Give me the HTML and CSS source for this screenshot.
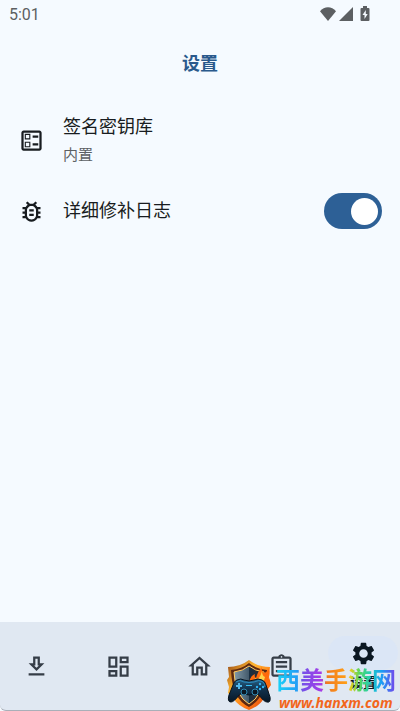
FILE: index.html
```
<!DOCTYPE html>
<html lang="zh-CN">
<head>
    <meta charset="UTF-8">
    <meta name="viewport" content="width=device-width, initial-scale=1.0">
    <title>设置</title>
    <link rel="stylesheet" href="styles.css">
</head>
<body>
    <!-- Status bar -->
    <div class="status-bar">
        <span class="time">5:01</span>
        <div class="status-icons">
            <svg width="18" height="16" viewBox="0 0 18 16"><path d="M9 15L1 5.200C3.200 2.600 6 1.300 9 1.300s5.800 1.300 8 3.900z"/></svg>
            <svg width="15" height="16" viewBox="0 0 15 16"><path d="M14 1v14H0z"/></svg>
            <svg class="battery" width="10" height="16" viewBox="0 0 10 16"><path fill-rule="evenodd" d="M3 0h4v2h1.500Q9.500 2 9.500 3v11q0 1-1 1h-7q-1 0-1-1V3q0-1 1-1H3zM5.800 4L2.500 9h2v4l3.200-5h-1.900z"/></svg>
        </div>
    </div>

    <header class="header">
        <h1>设置</h1>
    </header>

    <main class="settings">
        <button type="button" class="setting">
            <svg class="icon" viewBox="0 0 24 24"><path d="M13 7.500h5v2h-5zm0 7h5v2h-5zM19 3H5c-1.100 0-2 .9-2 2v14c0 1.100.9 2 2 2h14c1.100 0 2-.9 2-2V5c0-1.100-.9-2-2-2zm0 16H5V5h14v14zM11 6H6v5h5V6zm-1 4H7V7h3v3zm1 3H6v5h5v-5zm-1 4H7v-3h3v3z"/></svg>
            <span class="setting-text">
                <span class="setting-title">签名密钥库</span>
                <span class="setting-value">内置</span>
            </span>
        </button>
        <label class="setting" for="verbose-log">
            <svg class="icon" viewBox="0 0 24 24"><path d="M20 8h-2.810c-.45-.78-1.070-1.450-1.820-1.960L17 4.410 15.590 3l-2.170 2.170C12.960 5.060 12.490 5 12 5s-.96.06-1.410.17L8.410 3 7 4.410l1.620 1.630C7.880 6.550 7.260 7.220 6.810 8H4v2h2.090c-.05.33-.09.66-.09 1v1H4v2h2v1c0 .34.04.67.09 1H4v2h2.810c1.040 1.790 2.970 3 5.190 3s4.150-1.210 5.190-3H20v-2h-2.090c.05-.33.09-.66.09-1v-1h2v-2h-2v-1c0-.34-.04-.67-.09-1H20V8zm-4 4v3c0 .22-.03.47-.07.7l-.1.65-.37.65c-.72 1.240-2.040 2-3.460 2s-2.740-.77-3.460-2l-.37-.64-.1-.65C8.030 15.480 8 15.230 8 15v-4c0-.23.03-.48.07-.7l.1-.65.37-.65c.3-.52.72-.97 1.210-1.310l.57-.39.74-.18c.31-.08.63-.12.94-.12.32 0 .63.04.95.12l.68.16.61.42c.5.34.91.78 1.210 1.310l.38.65.1.65c.04.22.07.47.07.69v1zm-6 2h4v2h-4zm0-4h4v2h-4z"/></svg>
            <span class="setting-title">详细修补日志</span>
            <input type="checkbox" role="switch" class="switch" id="verbose-log" checked>
        </label>
    </main>

    <!-- Bottom navigation -->
    <nav class="nav">
        <a href="#download" class="nav-item" aria-label="download">
            <svg class="icon" viewBox="0 0 24 24"><path d="M19 9h-4V3H9v6H5l7 7 7-7zm-8 2V5h2v6h1.170L12 13.170 9.830 11H11zm-6 7h14v2H5z"/></svg>
        </a>
        <a href="#dashboard" class="nav-item" aria-label="dashboard">
            <svg class="icon" viewBox="0 0 24 24"><path d="M19 5v2h-4V5h4M9 5v6H5V5h4m10 8v6h-4v-6h4M9 17v2H5v-2h4M21 3h-8v6h8V3zM11 3H3v10h8V3zm10 8h-8v10h8V11zm-10 4H3v6h8v-6z"/></svg>
        </a>
        <a href="#home" class="nav-item" aria-label="home">
            <svg class="icon" viewBox="0 0 24 24"><path d="M12 5.690l5 4.500V18h-2v-6H9v6H7v-7.810l5-4.500M12 3L2 12h3v8h6v-6h2v6h6v-8h3L12 3z"/></svg>
        </a>
        <a href="#tasks" class="nav-item" aria-label="tasks">
            <svg class="icon" viewBox="0 0 24 24"><path d="M7 15h7v2H7zm0-4h10v2H7zm0-4h10v2H7zm12-4h-4.180C14.400 1.840 13.300 1 12 1s-2.400.84-2.820 2H5c-1.100 0-2 .9-2 2v14c0 1.100.9 2 2 2h14c1.100 0 2-.9 2-2V5c0-1.100-.9-2-2-2zm-7-.25c.41 0 .75.34.75.75s-.34.75-.75.75-.75-.34-.75-.75.34-.75.75-.75zM19 19H5V5h14v14z"/></svg>
        </a>
        <a href="#settings" class="nav-item active">
            <span class="pill">
                <svg class="icon" viewBox="0 0 24 24"><path d="M19.140 12.940c.04-.3.06-.61.06-.94 0-.32-.02-.64-.07-.94l2.030-1.580c.18-.14.23-.41.12-.61l-1.920-3.320c-.12-.22-.37-.29-.59-.22l-2.390.96c-.5-.38-1.030-.7-1.620-.94l-.36-2.540c-.04-.24-.24-.41-.48-.41h-3.840c-.24 0-.43.17-.47.41l-.36 2.540c-.59.24-1.130.57-1.620.94l-2.390-.96c-.22-.08-.47 0-.59.22L2.740 8.870c-.12.21-.08.47.12.61l2.030 1.580c-.05.3-.09.63-.09.94s.02.64.07.94l-2.030 1.580c-.18.14-.23.41-.12.61l1.920 3.320c.12.22.37.29.59.22l2.390-.96c.5.38 1.030.7 1.620.94l.36 2.540c.05.24.24.41.48.41h3.840c.24 0 .44-.17.47-.41l.36-2.540c.59-.24 1.130-.56 1.620-.94l2.390.96c.22.08.47 0 .59-.22l1.920-3.320c.12-.22.07-.47-.12-.61l-2.010-1.580zM12 15.800a3.800 3.800 0 1 1 0-7.600 3.800 3.800 0 0 1 0 7.600z"/></svg>
            </span>
            <span class="nav-label">设置</span>
        </a>
    </nav>

    <!-- Site badge over the navigation -->
    <div class="badge">
        <svg class="badge-logo" viewBox="0 0 46 50">
            <defs>
                <linearGradient id="rim" x1="0" y1="0" x2="1" y2="1">
                    <stop offset="0" stop-color="#8b3f13"/>
                    <stop offset=".35" stop-color="#ffb52e"/>
                    <stop offset=".7" stop-color="#ff7415"/>
                    <stop offset="1" stop-color="#c63c0b"/>
                </linearGradient>
                <linearGradient id="steel" x1="0" y1="0" x2="1" y2="0">
                    <stop offset="0" stop-color="#839aa8"/>
                    <stop offset=".5" stop-color="#42596a"/>
                    <stop offset=".5" stop-color="#172f42"/>
                    <stop offset="1" stop-color="#392b29"/>
                </linearGradient>
                <linearGradient id="pad" x1="0" y1="0" x2="0" y2="1">
                    <stop offset="0" stop-color="#28658a"/>
                    <stop offset=".4" stop-color="#133450"/>
                    <stop offset="1" stop-color="#071726"/>
                </linearGradient>
            </defs>
            <path fill="url(#rim)" d="M23 0q9 7 21 7l-1 10 2 8-3 4 1 6-5 3q-4 8-15 12Q12 46 7 38l-5-5 1-6-2-7 2-3-1-10q12 0 21-7z"/>
            <path fill="#5c2811" d="M23 3q7 6 18 7-1 28-18 37Q6 39 5 10q11-1 18-7z"/>
            <path fill="url(#steel)" stroke="#ffcb63" d="M23 6q6 5 15 6-1 24-15 32Q9 36 8 12q9-1 15-6z"/>
            <path fill="#ff6b0c" d="M23 22q2-7 6-8-1 3 1 4 2-7 6-11-1 4 2 6 4-1 4-5 3 5 0 11 3 0 2 6l-5 7z"/>
            <path fill="#ffd34b" d="M27 22q2-2 2-4 2 2 4 0 2-3 3-7 0 5 3 6-1 4-3 8z"/>
            <path fill="url(#pad)" stroke="#06131f" d="M11 20q4-2 7 0 5 2 10 0 4-2 8 0 3 1 4 5l4 12q1 6-3 5-3 0-8-7-2-2-5-1-5 2-10 0-3-1-5 1-5 7-8 7-4 0-2-7l4-10q1-4 4-5z"/>
            <path fill="none" stroke="#2d8bbd" d="M10 22q4-3 8 0 5 1 10 0 5-3 9 0 2 2 2 5"/>
            <path fill="none" stroke="#50b9ed" stroke-width="2" d="M13 23v6M10 26h6"/>
            <circle cx="18" cy="32" r="3" fill="#0a1723" stroke="#328bb4"/>
            <circle cx="29" cy="32" r="3" fill="#0a1723" stroke="#328bb4"/>
            <g fill="#32b5f5"><circle cx="34" cy="24" r="1.200"/><circle cx="31" cy="27" r="1.200"/><circle cx="37" cy="27" r="1.200"/><circle cx="34" cy="29" r="1.200"/></g>
            <path fill="#36bff5" d="M20 25h6v1h-6z"/>
        </svg>
        <div class="badge-text">
            <div class="badge-name">西美手游网</div>
            <div class="badge-url">www.hanxm.com</div>
        </div>
    </div>
</body>
</html>
```

FILE: styles.css
```
* {
    box-sizing: border-box;
}
body {
    position: relative;
    display: flex;
    flex-direction: column;
    min-height: 100vh;
    margin: 0;
    background-color: #f5faff;
    color: #181c20;
    font-family: Roboto, "Noto Sans CJK SC", sans-serif;
}
svg {
    display: block;
    fill: currentColor;
}
.icon {
    flex: none;
    width: 27px;
    height: 27px;
}

/* status bar */
.status-bar {
    display: flex;
    align-items: center;
    justify-content: space-between;
    height: 28px;
    padding: 0 30px 0 9px;
    color: #5c5f62;
}
.time {
    font-size: 16px;
}
.status-icons {
    display: flex;
    gap: 2px;
}
.battery {
    margin-left: 4px;
}

.header {
    padding: 22px 0 20px;
}
h1 {
    margin: 0;
    color: #29598c;
    font-size: 18px;
    font-weight: 700;
    line-height: 28px;
    text-align: center;
}

/* settings list */
.settings {
    flex: 1;
}
.setting {
    display: flex;
    align-items: center;
    gap: 18px;
    width: 100%;
    min-height: 58px;
    padding: 6px 18px;
    border: none;
    background: none;
    color: inherit;
    font-family: inherit;
    text-align: left;
    cursor: pointer;
}
button.setting {
    min-height: 84px;
}
.setting-text {
    display: flex;
    flex-direction: column;
    gap: 2px;
}
.setting-title {
    font-size: 18px;
    line-height: 28px;
}
.setting-value {
    color: #5c6064;
    font-size: 15px;
    line-height: 24px;
}
.switch {
    display: flex;
    align-items: center;
    justify-content: flex-end;
    width: 58px;
    height: 36px;
    margin: 0 0 0 auto;
    padding: 4px;
    border-radius: 18px;
    background-color: #2d6096;
    appearance: none;
    cursor: pointer;
}
.switch::before {
    content: "";
    width: 27px;
    height: 27px;
    border-radius: 50%;
    background-color: #fff;
}
.switch:not(:checked) {
    justify-content: flex-start;
    background-color: #b9c3cf;
}

/* bottom navigation */
.nav {
    display: flex;
    gap: 8px;
    height: 89px;
    border-bottom: 1px solid #a9afb8;
    border-radius: 0 0 6px 6px;
    background-color: #e0e8f2;
}
.nav-item {
    display: flex;
    flex: 1;
    flex-direction: column;
    align-items: center;
    justify-content: center;
    color: #353d47;
    text-decoration: none;
}
.nav-item.active {
    color: #0b1722;
}
.pill {
    display: flex;
    align-items: center;
    justify-content: center;
    width: 70px;
    height: 34px;
    border-radius: 17px;
    background-color: #dbe6f6;
}
.nav-label {
    font-size: 13px;
    font-weight: 700;
    line-height: 26px;
}

/* badge */
.badge {
    position: absolute;
    right: 4px;
    bottom: 0;
    display: flex;
    align-items: flex-end;
    gap: 4px;
}
.badge-logo {
    width: 46px;
    height: 52px;
}
.badge-name {
    background: linear-gradient(90deg, #18d5f6, #249cf5 18%, #7352e8 22%, #a63be8 38%, #f07a20 42%, #ff9c16 58%, #e7cf1f 62%, #50d763 70%, #1ccbc6 80%, #1b9df4 88%, #7940eb);
    background-clip: text;
    color: transparent;
    font-size: 24px;
    font-weight: 700;
    line-height: 28px;
}
.badge-url {
    padding-left: 3px;
    color: #f2661c;
    font-family: "Noto Sans", sans-serif;
    font-size: 14px;
    font-style: italic;
    font-weight: 700;
    line-height: 16px;
}
```
